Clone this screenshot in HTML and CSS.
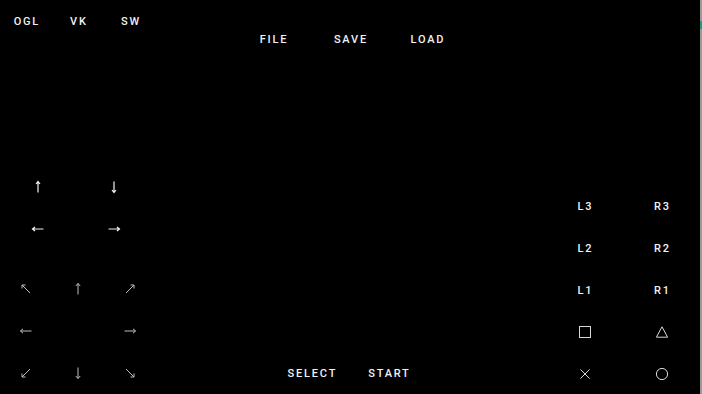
FILE: index.html
```html
<!DOCTYPE html>
<html>
<head>
<meta charset="utf-8">
<link rel="stylesheet" href="styles.css">
</head>
<body>
<div class="screen">
  <div class="col col-left">
    <div class="renderers">
      <div class="cell txt">OGL</div>
      <div class="cell txt">VK</div>
      <div class="cell txt">SW</div>
    </div>
    <div class="pads">
      <div class="dpad">
        <div class="cell"><svg class="ico" viewBox="0 0 14 14"><path d="M7 12.5V1.5M5 4L7 1.5L9 4"/></svg></div>
        <div class="cell"><svg class="ico" viewBox="0 0 14 14"><path d="M7 1.5V12.5M5 10L7 12.5L9 10"/></svg></div>
        <div class="cell"><svg class="ico" viewBox="0 0 14 14"><path d="M12.5 7H1.5M4 5L1.5 7L4 9"/></svg></div>
        <div class="cell"><svg class="ico" viewBox="0 0 14 14"><path d="M1.5 7H12.5M10 5L12.5 7L10 9"/></svg></div>
      </div>
      <div class="stick">
        <div class="cell"><svg class="ico dim" viewBox="0 0 14 14"><path d="M11 11L3 3M3 6.5V3H6.5"/></svg></div>
        <div class="cell"><svg class="ico dim" viewBox="0 0 14 14"><path d="M7 12.5V1.5M4.8 4L7 1.5L9.2 4"/></svg></div>
        <div class="cell"><svg class="ico dim" viewBox="0 0 14 14"><path d="M3 11L11 3M7.5 3H11V6.5"/></svg></div>
        <div class="cell"><svg class="ico dim" viewBox="0 0 14 14"><path d="M12.5 7H1.5M4 4.8L1.5 7L4 9.2"/></svg></div>
        <div class="cell"></div>
        <div class="cell"><svg class="ico dim" viewBox="0 0 14 14"><path d="M1.5 7H12.5M10 4.8L12.5 7L10 9.2"/></svg></div>
        <div class="cell"><svg class="ico dim" viewBox="0 0 14 14"><path d="M11 3L3 11M3 7.5V11H6.5"/></svg></div>
        <div class="cell"><svg class="ico dim" viewBox="0 0 14 14"><path d="M7 1.5V12.5M4.8 10L7 12.5L9.2 10"/></svg></div>
        <div class="cell"><svg class="ico dim" viewBox="0 0 14 14"><path d="M3 3L11 11M7.5 11H11V7.5"/></svg></div>
      </div>
    </div>
  </div>
  <div class="col col-mid">
    <div class="menu">
      <div class="cell txt">FILE</div>
      <div class="cell txt">SAVE</div>
      <div class="cell txt">LOAD</div>
    </div>
    <div class="sys">
      <div class="cell txt">SELECT</div>
      <div class="cell txt">START</div>
    </div>
  </div>
  <div class="col col-right">
    <div class="face">
      <div class="cell txt">L3</div>
      <div class="cell txt">R3</div>
      <div class="cell txt">L2</div>
      <div class="cell txt">R2</div>
      <div class="cell txt">L1</div>
      <div class="cell txt">R1</div>
      <div class="cell"><svg class="shape" viewBox="0 0 14 14"><rect x="1.5" y="1.5" width="11" height="11"/></svg></div>
      <div class="cell"><svg class="shape" viewBox="0 0 14 14"><path d="M7 1.8L12.6 12.2H1.4Z"/></svg></div>
      <div class="cell"><svg class="shape" viewBox="0 0 14 14"><path d="M2.4 2.4L11.6 11.6M11.6 2.4L2.4 11.6"/></svg></div>
      <div class="cell"><svg class="shape" viewBox="0 0 14 14"><circle cx="7" cy="7" r="5.6"/></svg></div>
    </div>
  </div>
  <div class="edge"><div class="edge-mark"></div></div>
</div>
</body>
</html>
```

FILE: styles.css
```css
html, body {
  margin: 0;
  padding: 0;
  background: #000;
}
body {
  font-family: Roboto, "Liberation Sans", sans-serif;
  font-weight: 500;
  font-size: 11px;
  letter-spacing: 1.8px;
  color: #f2f2f2;
  overflow: hidden;
}
.screen {
  width: 702px;
  height: 394px;
  display: grid;
  grid-template-columns: 156px 1fr 156px 2px;
  background: #000;
}
.col {
  display: flex;
  flex-direction: column;
  justify-content: space-between;
  height: 394px;
}
.cell {
  display: flex;
  align-items: center;
  justify-content: center;
  height: 42px;
}
.txt {
  padding-left: 1.8px;
}
.renderers {
  display: grid;
  grid-template-columns: repeat(3, 52px);
}
.pads {
  display: flex;
  flex-direction: column;
  gap: 18px;
}
.dpad {
  display: grid;
  grid-template-columns: repeat(2, 76px);
}
.stick {
  display: grid;
  grid-template-columns: repeat(3, 52px);
}
.col-mid {
  align-items: center;
}
.menu {
  display: grid;
  grid-template-columns: repeat(3, 77px);
  margin-top: 18px;
}
.sys {
  display: grid;
  grid-template-columns: repeat(2, 77px);
}
.col-right {
  justify-content: flex-end;
  align-items: flex-end;
}
.face {
  display: grid;
  grid-template-columns: repeat(2, 77px);
  padding-bottom: 0;
  margin-bottom: -1px;
}
.ico {
  width: 14px;
  height: 14px;
  fill: none;
  stroke: #f4f4f4;
  stroke-width: 1.2;
}
.ico.dim {
  stroke: #bdbdbd;
  stroke-width: 1;
}
.shape {
  width: 14px;
  height: 14px;
  fill: none;
  stroke: #d8d8d8;
  stroke-width: 1;
}
.edge {
  background: #9a9a9a;
  padding-top: 21px;
}
.edge-mark {
  height: 8px;
  background: #1d9a88;
}
```
